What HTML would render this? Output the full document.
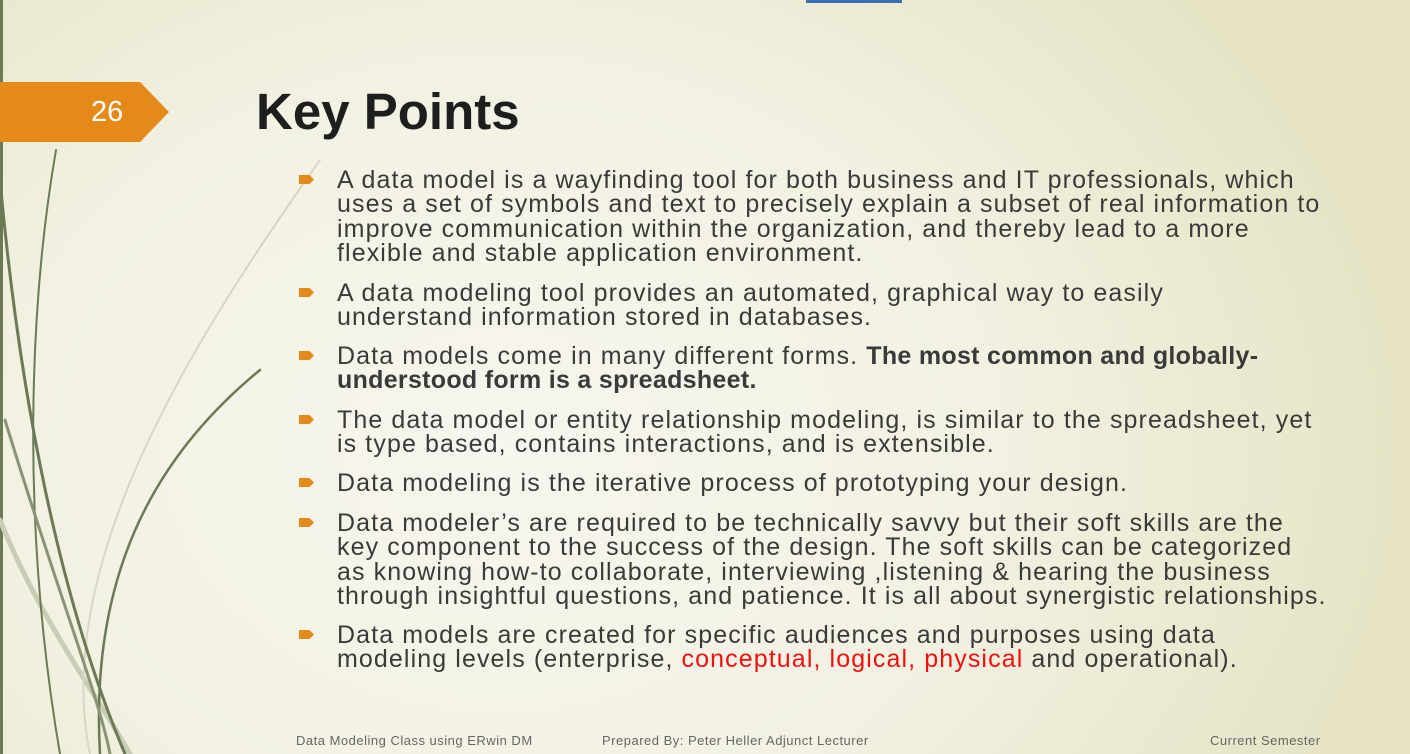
<!DOCTYPE html>
<html><head><meta charset="utf-8"><style>
html,body{margin:0;padding:0}
body{width:1410px;height:754px;overflow:hidden;position:relative;font-family:"Liberation Sans",sans-serif;
background:radial-gradient(ellipse 900px 700px at 500px 450px,#f7f6ef 0%,#f2f1e2 55%,#e6e4c5 100%);}
.tab{position:absolute;left:0;top:82px;width:140px;height:60px;background:#e58a18;}
.tab:after{content:"";position:absolute;left:140px;top:0;border-left:29px solid #e58a18;border-top:30px solid transparent;border-bottom:30px solid transparent}
.num{position:absolute;left:91px;top:96px;color:#fff;font-size:29px}
h1{position:absolute;left:256px;top:82px;margin:0;font-size:51px;font-weight:bold;color:#1e1e1e;letter-spacing:0px}
.l{position:absolute;left:337px;font-size:25px;color:#3a3a3a;white-space:nowrap;letter-spacing:1.1px;line-height:24px}
.b{position:absolute;left:299px;width:15px;height:9px;background:#e58a18;clip-path:polygon(0 0,70% 0,100% 50%,70% 100%,0 100%)}
.f{position:absolute;top:733px;font-size:13px;color:#666;letter-spacing:0.5px}
</style></head><body>
<svg style="position:absolute;left:0;top:0" width="1410" height="754">
<rect x="0" y="0" width="3" height="754" fill="#6b7a55"/>
<rect x="806" y="0" width="96" height="3" fill="#3b6fb0"/>
<g fill="none" stroke-linecap="round">
<path d="M0 520 C40 620 100 700 130 754" stroke="#c9cdb6" stroke-width="5"/>
<path d="M90 754 C50 560 200 330 320 160" stroke="#d6d7c6" stroke-width="2"/>
<path d="M56 150 C30 300 20 520 60 754" stroke="#6b7a55" stroke-width="2"/>
<path d="M0 180 C20 400 60 600 125 754" stroke="#6b7a55" stroke-width="3"/>
<path d="M100 754 C90 580 150 460 260 370" stroke="#6b7a55" stroke-width="2.5"/>
<path d="M5 420 C60 600 100 700 110 754" stroke="#8a9474" stroke-width="3"/>
</g></svg>
<div class="tab"></div><div class="num">26</div>
<h1>Key Points</h1>
<div class="b" style="top:175px"></div>
<div class="l" style="top:168px">A data model is a wayfinding tool for both business and IT professionals, which</div>
<div class="l" style="top:192px">uses a set of symbols and text to precisely explain a subset of real information to</div>
<div class="l" style="top:217px">improve communication within the organization, and thereby lead to a more</div>
<div class="l" style="top:241px">flexible and stable application environment.</div>
<div class="b" style="top:288px"></div>
<div class="l" style="top:281px">A data modeling tool provides an automated, graphical way to easily</div>
<div class="l" style="top:305px">understand information stored in databases.</div>
<div class="b" style="top:351px"></div>
<div class="l" style="top:344px">Data models come in many different forms. <b style="letter-spacing:0.3px">The most common and globally-</b></div>
<div class="l" style="top:368px"><b style="letter-spacing:0.3px">understood form is a spreadsheet.</b></div>
<div class="b" style="top:415px"></div>
<div class="l" style="top:408px">The data model or entity relationship modeling, is similar to the spreadsheet, yet</div>
<div class="l" style="top:432px">is type based, contains interactions, and is extensible.</div>
<div class="b" style="top:478px"></div>
<div class="l" style="top:471px">Data modeling is the iterative process of prototyping your design.</div>
<div class="b" style="top:518px"></div>
<div class="l" style="top:511px">Data modeler’s are required to be technically savvy but their soft skills are the</div>
<div class="l" style="top:535px">key component to the success of the design. The soft skills can be categorized</div>
<div class="l" style="top:560px">as knowing how-to collaborate, interviewing ,listening &amp; hearing the business</div>
<div class="l" style="top:584px">through insightful questions, and patience. It is all about synergistic relationships.</div>
<div class="b" style="top:630px"></div>
<div class="l" style="top:623px">Data models are created for specific audiences and purposes using data</div>
<div class="l" style="top:647px">modeling levels (enterprise, <span style="color:#f01010">conceptual, logical, physical</span> and operational).</div>
<div class="f" style="left:296px">Data Modeling Class using ERwin DM</div>
<div class="f" style="left:602px">Prepared By: Peter Heller Adjunct Lecturer</div>
<div class="f" style="left:1210px">Current Semester</div>
</body></html>
